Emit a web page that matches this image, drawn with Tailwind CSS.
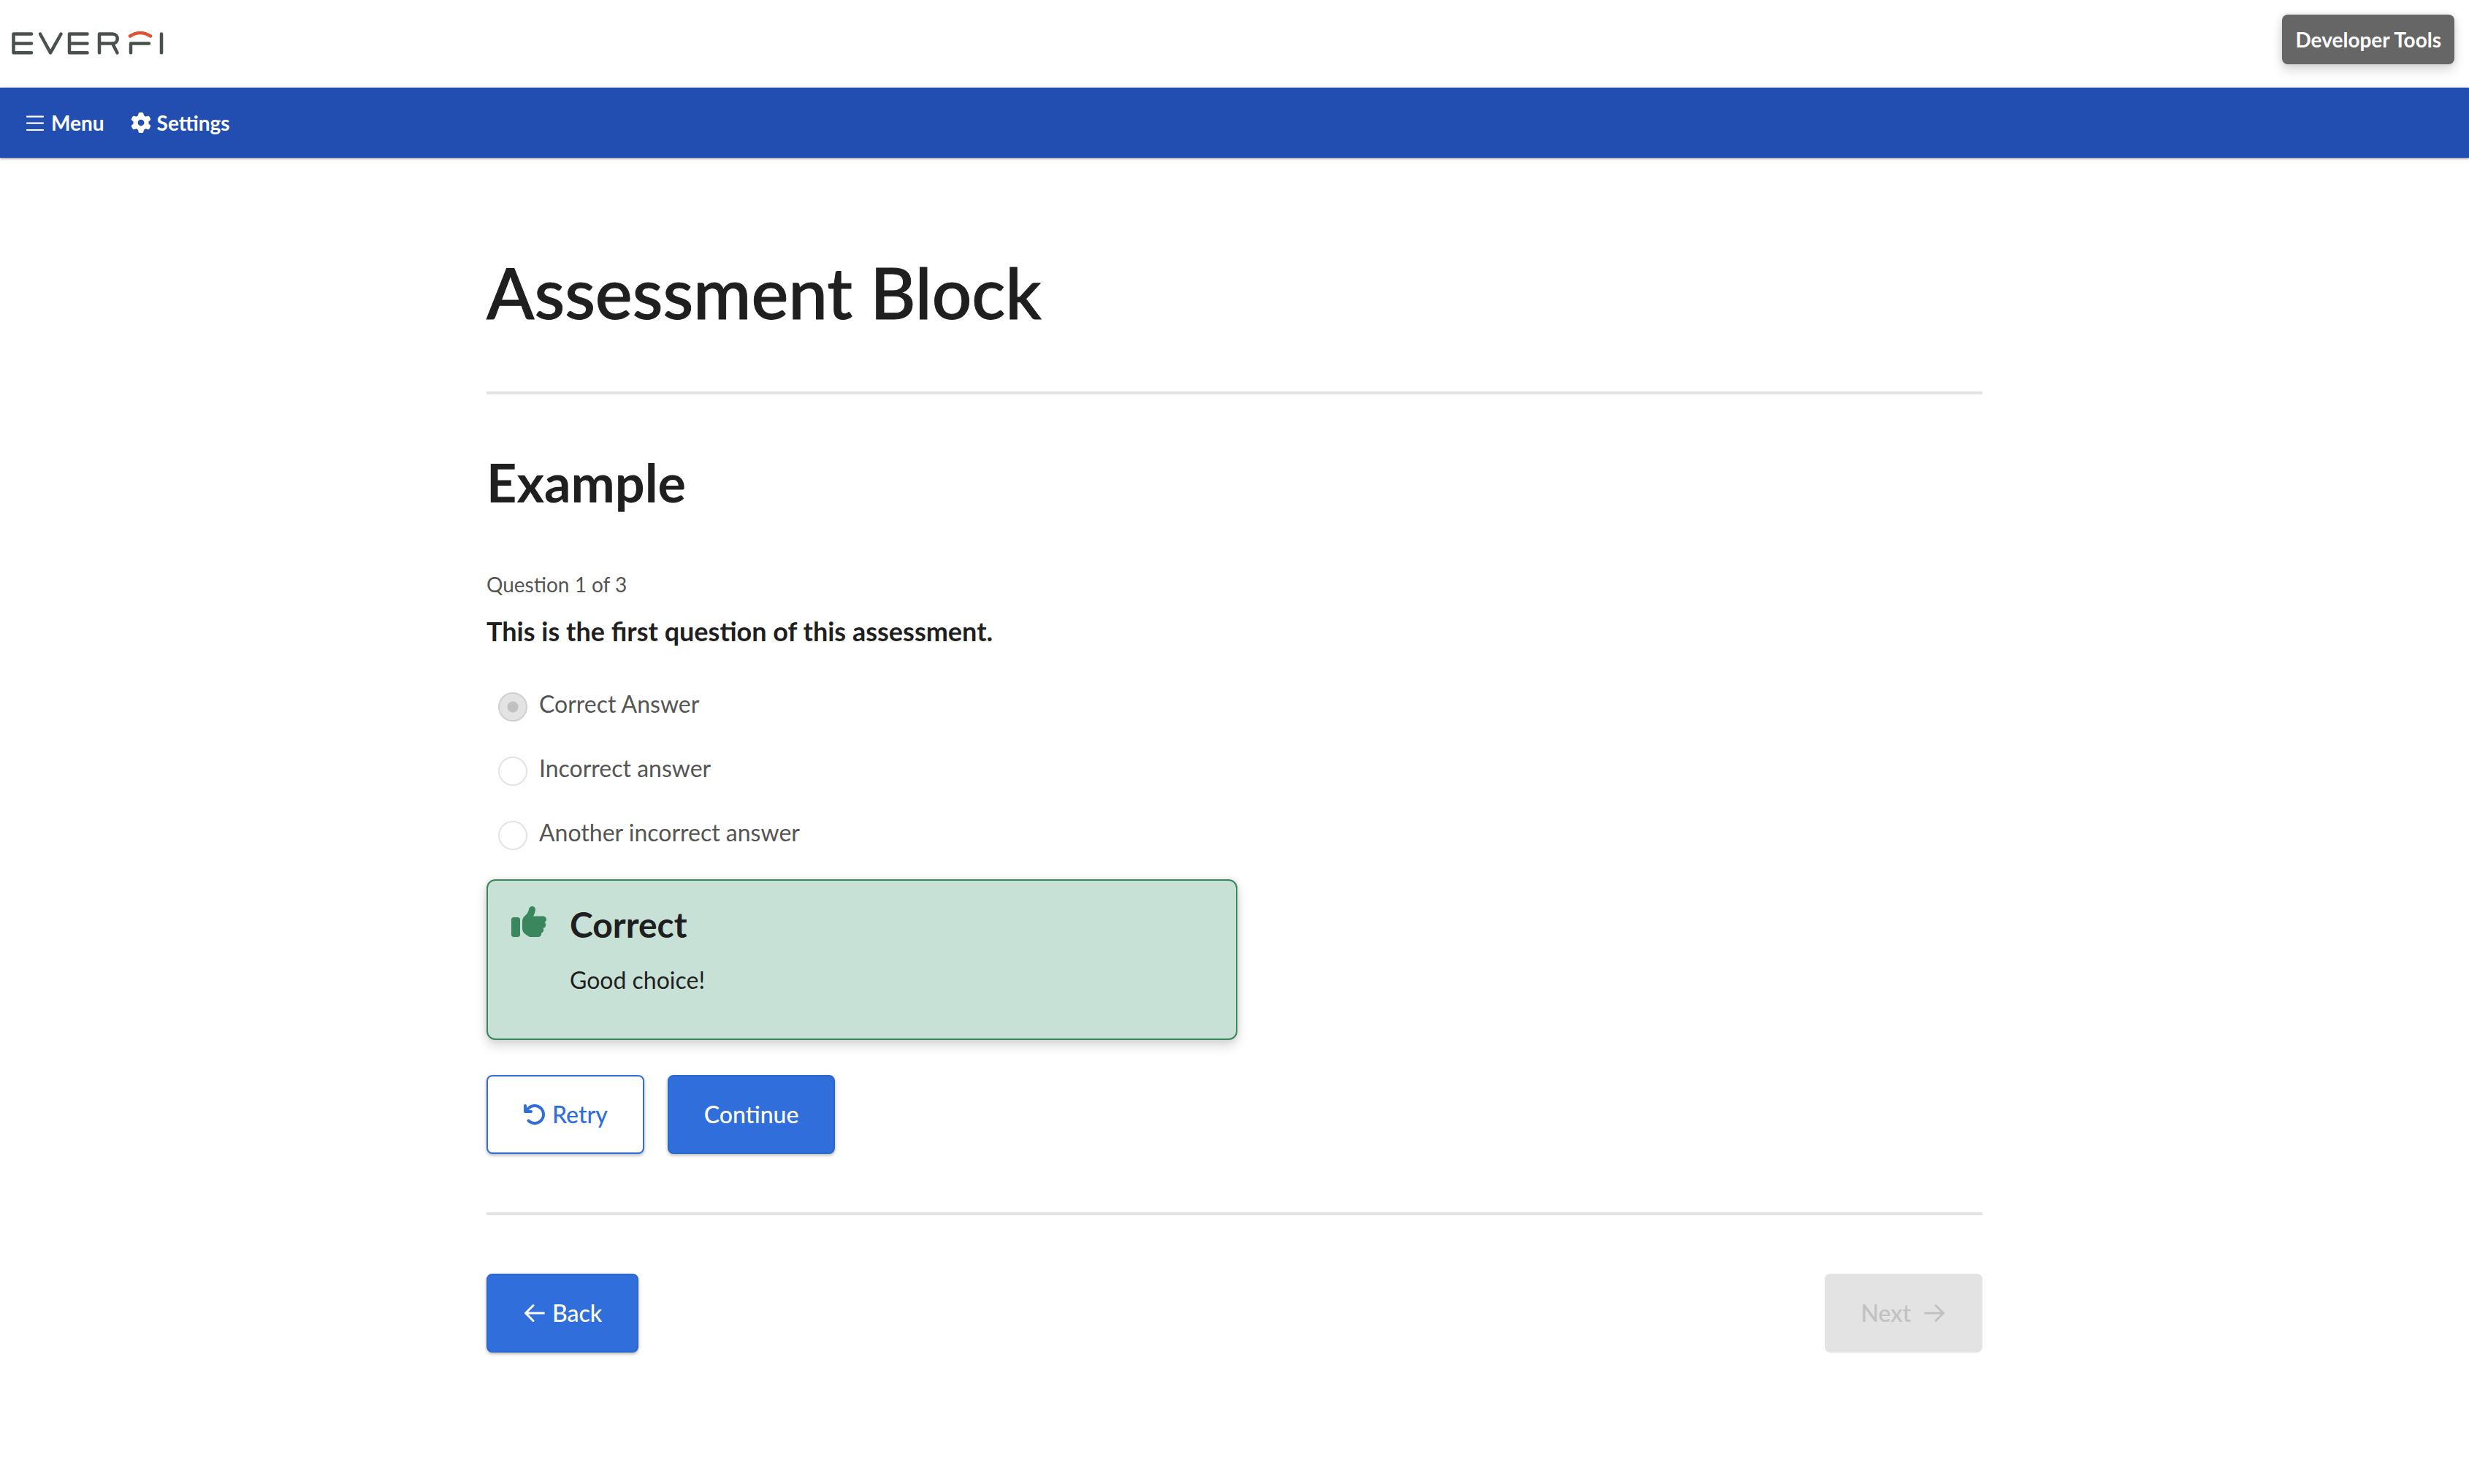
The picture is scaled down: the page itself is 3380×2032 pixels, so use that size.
<!DOCTYPE html>
<html lang="en">
<head>
<meta charset="utf-8">
<title>Assessment Block</title>
<script src="https://cdn.jsdelivr.net/npm/@tailwindcss/browser@4"></script>
</head>
<body class="min-h-screen bg-white font-['Lato',sans-serif] text-[32px] leading-[48px] text-[#1f1f1f]">
<header class="flex h-[120px] items-start justify-between pl-4 pr-5">
  <a href="#" aria-label="EVERFI" class="mt-10">
    <svg class="h-10 w-[210px]" viewBox="0 0 210 40" fill="none" stroke="#4a504e" stroke-width="4.500" stroke-linecap="round" stroke-linejoin="round" aria-hidden="true">
      <path d="M27 6.500H2.500V32.300H27M2.500 19.500H27"/>
      <path d="M39 6.500L53 32.300L67.500 6.500"/>
      <path d="M103.500 6.500H79V32.300H103.500M79 19.500H103.500"/>
      <path d="M120 32.300V6.500H138C147 6.500 147 19.500 138 19.500H120M138 19.500L144.500 32.300"/>
      <path d="M163 32.300V19.500H188"/>
      <path d="M205 6.500V32.300"/>
      <path d="M162 9.500Q176 .5 190 9.500" stroke="#df5430"/>
    </svg>
  </a>
  <button type="button" class="mt-5 h-[68px] rounded-lg bg-[#666] px-[18px] text-[28px] leading-10 font-bold text-white shadow-[0_8px_16px_rgba(0,0,0,0.15),0_0_8px_rgba(0,0,0,0.1)]">Developer Tools</button>
</header>
<nav class="relative flex h-24 items-center gap-9 bg-[#214eb0] px-8 text-[28px] leading-10 font-bold text-white shadow-[0_1px_3px_rgba(0,0,0,0.5)]">
  <button type="button" class="flex items-center gap-1.5">
    <svg class="size-8" viewBox="0 0 32 32" fill="none" stroke="currentColor" stroke-width="2.200" stroke-linecap="round" aria-hidden="true"><path d="M5 7.700H27M5 16.700H27M5 26H27"/></svg>
    Menu
  </button>
  <button type="button" class="flex items-center gap-2">
    <svg class="size-7" viewBox="0 0 512 512" fill="currentColor" aria-hidden="true"><path d="M495.9 166.6c3.2 8.7 .5 18.4-6.4 24.6l-43.3 39.4c1.1 8.3 1.700 16.800 1.700 25.400s-.6 17.100-1.700 25.400l43.300 39.400c6.900 6.200 9.600 15.900 6.400 24.600c-4.400 11.900-9.700 23.300-15.800 34.300l-4.700 8.100c-6.600 11-14 21.400-22.100 31.200c-5.900 7.200-15.700 9.600-24.500 6.800l-55.700-17.700c-13.400 10.300-28.200 18.900-44 25.400l-12.500 57.100c-2 9.100-9 16.300-18.200 17.800c-13.800 2.300-28 3.500-42.500 3.500s-28.700-1.200-42.500-3.500c-9.200-1.500-16.200-8.700-18.200-17.800l-12.500-57.100c-15.800-6.500-30.600-15.100-44-25.400L83.100 425.900c-8.800 2.800-18.600 .3-24.500-6.800c-8.100-9.800-15.500-20.200-22.100-31.200l-4.700-8.100c-6.100-11-11.400-22.400-15.800-34.300c-3.200-8.700-.5-18.400 6.400-24.600l43.300-39.400C64.600 273.100 64 264.600 64 256s.6-17.100 1.700-25.400L22.400 191.200c-6.900-6.200-9.600-15.900-6.400-24.600c4.400-11.900 9.700-23.300 15.800-34.300l4.700-8.100c6.600-11 14-21.400 22.100-31.200c5.900-7.200 15.700-9.600 24.500-6.800l55.700 17.700c13.400-10.300 28.200-18.900 44-25.400l12.500-57.100c2-9.100 9-16.300 18.200-17.800C227.300 1.200 241.500 0 256 0s28.700 1.200 42.500 3.500c9.200 1.500 16.200 8.700 18.200 17.800l12.500 57.100c15.800 6.500 30.600 15.100 44 25.400l55.700-17.700c8.800-2.800 18.600-.3 24.500 6.800c8.100 9.800 15.500 20.200 22.100 31.200l4.700 8.100c6.100 11 11.400 22.400 15.800 34.300zM256 336a80 80 0 1 0 0-160 80 80 0 1 0 0 160z"/></svg>
    Settings
  </button>
</nav>
<main class="mx-auto w-full max-w-[2048px] pt-[124px] pb-20">
  <h1 class="text-[96px] leading-[120px] font-medium [-webkit-text-stroke:1px_#1f1f1f]">Assessment Block</h1>
  <hr class="my-[76px] border-t-4 border-[#e3e3e3]">
  <h2 class="text-[72px] leading-[88px] font-bold">Example</h2>
  <form>
    <p class="mt-[76px] text-[28px] leading-10 text-[#555]">Question 1 of 3</p>
    <fieldset class="mt-5">
      <legend class="text-[36px] leading-[48px] font-bold">This is the first question of this assessment.</legend>
      <div class="mt-[52px] flex flex-col gap-10 pl-4 text-[#555]">
        <label class="flex items-end gap-4"><input type="radio" name="answer" checked disabled class="size-10 appearance-none rounded-full border-2 border-[#d0d0d0] bg-[radial-gradient(circle,#c1c1c1_7px,#e3e3e3_8px)] bg-origin-border">Correct Answer</label>
        <label class="flex items-end gap-4"><input type="radio" name="answer" disabled class="size-10 appearance-none rounded-full border-2 border-[#e3e3e3] bg-white">Incorrect answer</label>
        <label class="flex items-end gap-4"><input type="radio" name="answer" disabled class="size-10 appearance-none rounded-full border-2 border-[#e3e3e3] bg-white">Another incorrect answer</label>
      </div>
    </fieldset>
    <section role="status" class="mt-10 flex max-w-[1028px] gap-8 rounded-xl border-2 border-[#3b875d] bg-[#c8e1d6] px-8 pt-8 pb-14 shadow-[0_8px_16px_rgba(0,0,0,0.15),0_0_8px_rgba(0,0,0,0.1)]">
      <svg class="size-12 shrink-0 text-[#3b875d]" viewBox="0 0 512 512" fill="currentColor" aria-hidden="true"><path d="M313.4 32.9c26 5.2 42.9 30.5 37.7 56.5l-2.3 11.4c-5.3 26.7-15.1 52.1-28.8 75.2H464c26.5 0 48 21.5 48 48c0 18.5-10.5 34.6-25.9 42.6C497 275.4 504 288.9 504 304c0 23.4-16.8 42.9-38.9 47.1c4.4 7.3 6.9 15.8 6.9 24.9c0 21.3-13.9 39.4-33.1 45.6c.7 3.3 1.1 6.8 1.1 10.4c0 26.5-21.5 48-48 48H294.5c-19 0-37.5-5.6-53.3-16.1l-38.5-25.7C176 420.4 160 390.4 160 358.3V320 272 247.1c0-29.2 13.3-56.7 36-75l7.4-5.9c26.5-21.2 44.6-51 51.2-84.2l2.3-11.4c5.2-26 30.5-42.9 56.5-37.7zM32 192H96c17.700 0 32 14.300 32 32V448c0 17.700-14.300 32-32 32H32c-17.700 0-32-14.300-32-32V224c0-17.700 14.300-32 32-32z"/></svg>
      <div>
        <h3 class="text-[48px] leading-[56px] font-bold">Correct</h3>
        <p class="mt-6">Good choice!</p>
      </div>
    </section>
    <div class="mt-12 flex gap-8 font-medium">
      <button type="button" class="flex h-[108px] items-center gap-2 rounded-lg border-2 border-[#306fdb] bg-white px-12 text-[#306fdb] shadow-[0_2px_4px_rgba(0,0,0,0.3)]">
        <svg class="size-8" viewBox="0 0 512 512" fill="currentColor" aria-hidden="true"><path d="M125.7 160H176c17.7 0 32 14.3 32 32s-14.3 32-32 32H48c-17.7 0-32-14.3-32-32V64c0-17.7 14.3-32 32-32s32 14.3 32 32v51.2L97.6 97.6c87.5-87.5 229.3-87.5 316.8 0s87.5 229.3 0 316.8s-229.3 87.5-316.8 0c-12.5-12.5-12.5-32.8 0-45.3s32.8-12.5 45.3 0c62.5 62.5 163.8 62.5 226.3 0s62.5-163.8 0-226.3s-163.8-62.5-226.3 0L125.7 160z"/></svg>
        Retry
      </button>
      <button type="button" class="flex h-[108px] items-center rounded-lg border-2 border-[#2a67cc] bg-[#306fdb] px-12 text-white shadow-[0_2px_4px_rgba(0,0,0,0.3)]">Continue</button>
    </div>
  </form>
  <hr class="my-20 border-t-4 border-[#e3e3e3]">
  <div class="flex justify-between font-medium">
    <button type="button" class="flex h-[108px] items-center gap-2 rounded-lg border-2 border-[#2a67cc] bg-[#306fdb] px-12 text-white shadow-[0_2px_4px_rgba(0,0,0,0.3)]">
      <svg class="size-8" viewBox="0 0 32 32" fill="none" stroke="currentColor" stroke-width="3" stroke-linecap="round" stroke-linejoin="round" aria-hidden="true"><path d="M28.500 16H3.500M14 5.500L3.500 16L14 26.500"/></svg>
      Back
    </button>
    <button type="button" disabled class="flex h-[108px] items-center gap-4 rounded-lg border-2 border-[#e3e3e3] bg-[#e3e3e3] px-12 text-[#c1c1c1]">
      Next
      <svg class="size-8" viewBox="0 0 32 32" fill="none" stroke="currentColor" stroke-width="3" stroke-linecap="round" stroke-linejoin="round" aria-hidden="true"><path d="M3.500 16H28.500M18 5.500L28.500 16L18 26.500"/></svg>
    </button>
  </div>
</main>
</body>
</html>
